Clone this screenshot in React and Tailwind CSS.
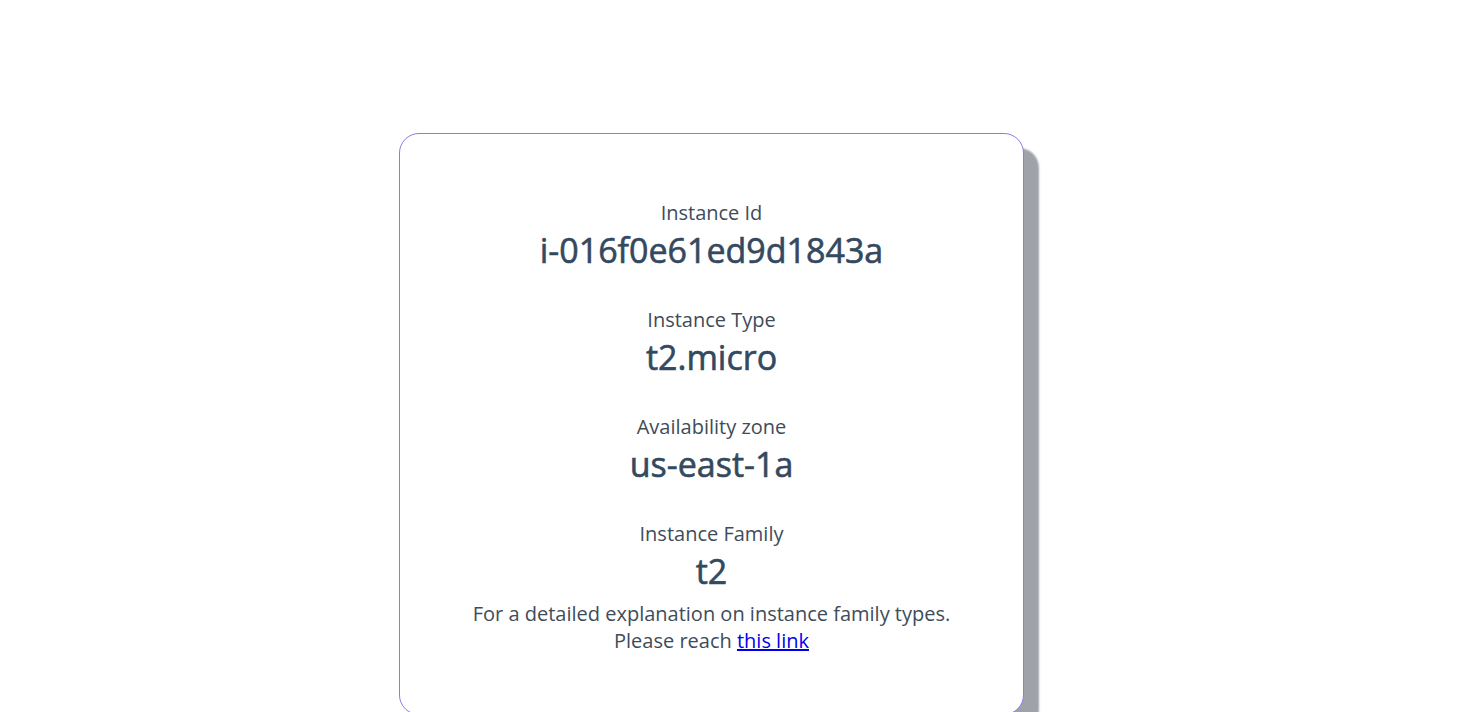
const items = [
  { label: "Instance Id", value: "i-016f0e61ed9d1843a" },
  { label: "Instance Type", value: "t2.micro" },
  { label: "Availability zone", value: "us-east-1a" },
  { label: "Instance Family", value: "t2" },
];

export default function App() {
  return (
    <div className="min-h-[712px] bg-white pt-[133px] [font-family:'Open_Sans',sans-serif] text-[#34495e]">
      <div className="ml-[399px] w-[625px] rounded-[20px] border border-[#8a7be6] bg-white px-8 pt-[64px] pb-[60px] text-center shadow-[15px_15px_2px_#9fa3a9]">
        {items.map((item, i) => (
          <div key={item.label} className={i > 0 ? "mt-[33px]" : ""}>
            <p className="text-[20px] leading-[30px] text-[#3e4c5a]">{item.label}</p>
            <p className="text-[34px] leading-[44px] font-medium [-webkit-text-stroke:0.6px_#34495e]">
              {item.value}
            </p>
          </div>
        ))}
        <p className="mt-[7px] text-[20px] leading-[27px] text-[#3e4c5a]">
          For a detailed explanation on instance family types.
          <br />
          Please reach{" "}
          <a href="#" className="text-[#0000ee] underline">
            this link
          </a>
        </p>
      </div>
    </div>
  );
}
